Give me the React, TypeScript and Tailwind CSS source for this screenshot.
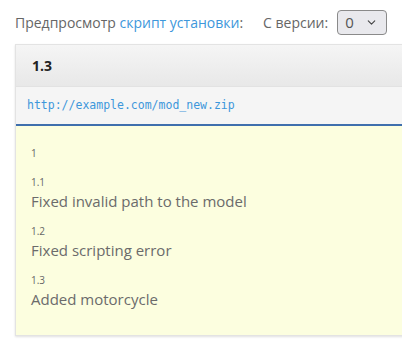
import { ChevronDown } from 'lucide-react'

const changes = [
  { version: '1', text: '' },
  { version: '1.1', text: 'Fixed invalid path to the model' },
  { version: '1.2', text: 'Fixed scripting error' },
  { version: '1.3', text: 'Added motorcycle' },
]

export default function App() {
  return (
    <div className="min-h-[351px] w-[402px] overflow-hidden bg-white pl-[15px] pt-[9px] font-['Open_Sans',sans-serif]">
      <div className="flex h-[26px] w-max items-center whitespace-nowrap text-[14px] text-[#666]">
        <span className="shrink-0">
          Предпросмотр <a className="text-[#3d97db]">скрипт установки</a>:
        </span>
        <span className="ml-[20px] shrink-0">С версии:</span>
        <div className="ml-[9px] flex h-[25px] w-[50px] shrink-0 items-center justify-between rounded-[4px] border border-[#8a8a8a] bg-[#e9e9ed] pl-[7px] pr-[8px] text-[15px] text-[#555]">
          <span>0</span>
          <ChevronDown className="h-[13px] w-[13px] text-[#444]" strokeWidth={2} />
        </div>
      </div>

      <div className="mt-[9px] w-[420px] border border-[#e3e3e3] shadow-[0_1px_2px_rgba(0,0,0,0.12)]">
        <div className="flex h-[41px] items-center bg-gradient-to-b from-[#f5f5f5] to-[#e8e8e8] pl-[16px] text-[14px] font-bold text-[#222]">
          1.3
        </div>
        <div className="flex h-[38px] items-center border-t border-[#e2e2e2] bg-[#f5f5f5] pl-[11px] font-['DejaVu_Sans_Mono',monospace] text-[11.5px] text-[#3d97db]">
          http://example.com/mod_new.zip
        </div>
        <div className="border-t-2 border-[#3f6fad] bg-[#fcfedf] pb-[26px] pl-[15px] pt-[18px]">
          {changes.map((c, i) => (
            <div key={c.version} className={i > 0 ? 'mt-[11px]' : ''}>
              <div className="text-[10px] leading-[18px] text-[#666]">{c.version}</div>
              {c.text && <div className="text-[15px] leading-[20px] text-[#6b6b6b]">{c.text}</div>}
            </div>
          ))}
        </div>
      </div>
    </div>
  )
}
